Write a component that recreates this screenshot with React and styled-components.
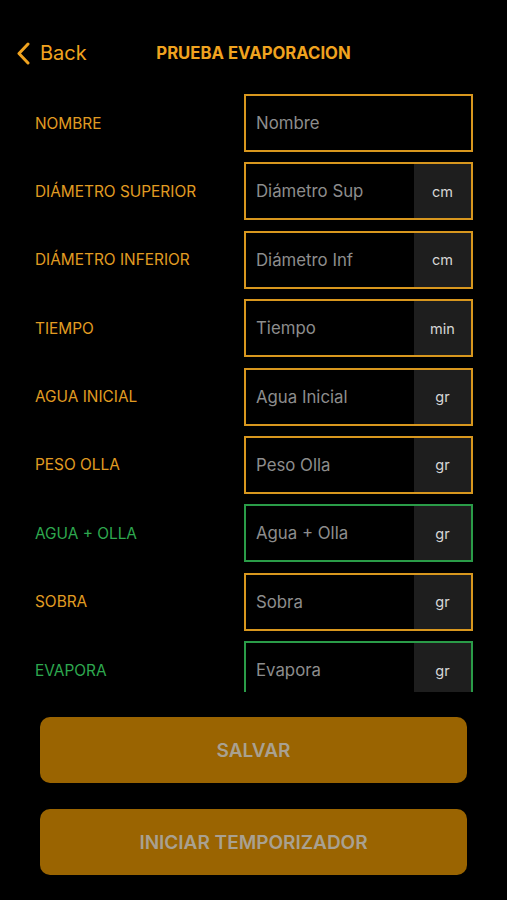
import React from 'react';
import styled, { createGlobalStyle } from 'styled-components';

const GlobalStyle = createGlobalStyle`
  html, body {
    margin: 0;
    padding: 0;
    background: #000;
  }
  body {
    font-family: Inter, "Noto Sans", "Liberation Sans", sans-serif;
  }
`;

const Screen = styled.div`
  width: 507px;
  height: 900px;
  background: #000;
  display: flex;
  flex-direction: column;
  overflow: hidden;
`;

const NavBar = styled.div`
  height: 94px;
  display: grid;
  grid-template-columns: 1fr auto 1fr;
  align-items: start;
  padding-top: 38px;
  box-sizing: border-box;
`;

const BackButton = styled.button`
  display: flex;
  align-items: center;
  gap: 9px;
  background: none;
  border: none;
  padding: 0 0 0 16px;
  color: #f0a31f;
  font-family: Inter, "Liberation Sans", sans-serif;
  font-size: 20px;
  cursor: pointer;
  justify-self: start;
  height: 30px;
`;

const Title = styled.h1`
  margin: 0;
  height: 30px;
  line-height: 30px;
  font-size: 16.7px;
  font-weight: 700;
  color: #f0a31f;
`;

const Scroll = styled.div`
  height: 598px;
  overflow: hidden;
  display: flex;
  flex-direction: column;
  gap: 10.4px;
`;

const Row = styled.div`
  display: flex;
  align-items: center;
  padding: 0 34px 0 35px;
  flex-shrink: 0;
`;

const Label = styled.label`
  flex: 1;
  font-size: 15.4px;
  color: ${p => (p.$green ? '#2ea84f' : '#e19c22')};
`;

const Field = styled.div`
  width: 229px;
  height: 58px;
  box-sizing: border-box;
  display: flex;
  border: 2px solid ${p => (p.$green ? '#2a9c48' : '#d8971e')};
`;

const Input = styled.input`
  flex: 1;
  min-width: 0;
  background: transparent;
  border: none;
  outline: none;
  padding: 0 10px;
  font-family: Inter, "Liberation Sans", sans-serif;
  font-size: 16.8px;
  color: #fff;
  &::placeholder {
    color: #8d8d8d;
  }
`;

const Unit = styled.div`
  width: 57px;
  display: flex;
  align-items: center;
  justify-content: center;
  background: #1e1e1e;
  color: #d6d6d6;
  font-size: 14.5px;
`;

const Actions = styled.div`
  display: flex;
  flex-direction: column;
  gap: 26px;
  padding: 25px 40px 0 40px;
`;

const ActionButton = styled.button`
  height: 66px;
  border: none;
  border-radius: 10px;
  background: #9a6401;
  color: #a9a191;
  font-family: Inter, "Liberation Sans", sans-serif;
  font-size: 19px;
  font-weight: 600;
  cursor: pointer;
`;

const fields = [
  { label: 'NOMBRE', placeholder: 'Nombre' },
  { label: 'DIÁMETRO SUPERIOR', placeholder: 'Diámetro Sup', unit: 'cm' },
  { label: 'DIÁMETRO INFERIOR', placeholder: 'Diámetro Inf', unit: 'cm' },
  { label: 'TIEMPO', placeholder: 'Tiempo', unit: 'min' },
  { label: 'AGUA INICIAL', placeholder: 'Agua Inicial', unit: 'gr' },
  { label: 'PESO OLLA', placeholder: 'Peso Olla', unit: 'gr' },
  { label: 'AGUA + OLLA', placeholder: 'Agua + Olla', unit: 'gr', green: true },
  { label: 'SOBRA', placeholder: 'Sobra', unit: 'gr' },
  { label: 'EVAPORA', placeholder: 'Evapora', unit: 'gr', green: true },
];

const Chevron = () => (
  <svg width="15" height="23" viewBox="0 0 15 23">
    <polyline points="12,2 3,11.5 12,21" fill="none" stroke="#f0a31f" strokeWidth="3" strokeLinecap="round" strokeLinejoin="round" />
  </svg>
);

export default function App() {
  return (
    <Screen>
      <GlobalStyle />
      <NavBar>
        <BackButton>
          <Chevron />
          Back
        </BackButton>
        <Title>PRUEBA EVAPORACION</Title>
        <div />
      </NavBar>
      <Scroll>
        {fields.map(f => (
          <Row key={f.label}>
            <Label $green={f.green}>{f.label}</Label>
            <Field $green={f.green}>
              <Input placeholder={f.placeholder} />
              {f.unit && <Unit>{f.unit}</Unit>}
            </Field>
          </Row>
        ))}
      </Scroll>
      <Actions>
        <ActionButton>SALVAR</ActionButton>
        <ActionButton>INICIAR TEMPORIZADOR</ActionButton>
      </Actions>
    </Screen>
  );
}
